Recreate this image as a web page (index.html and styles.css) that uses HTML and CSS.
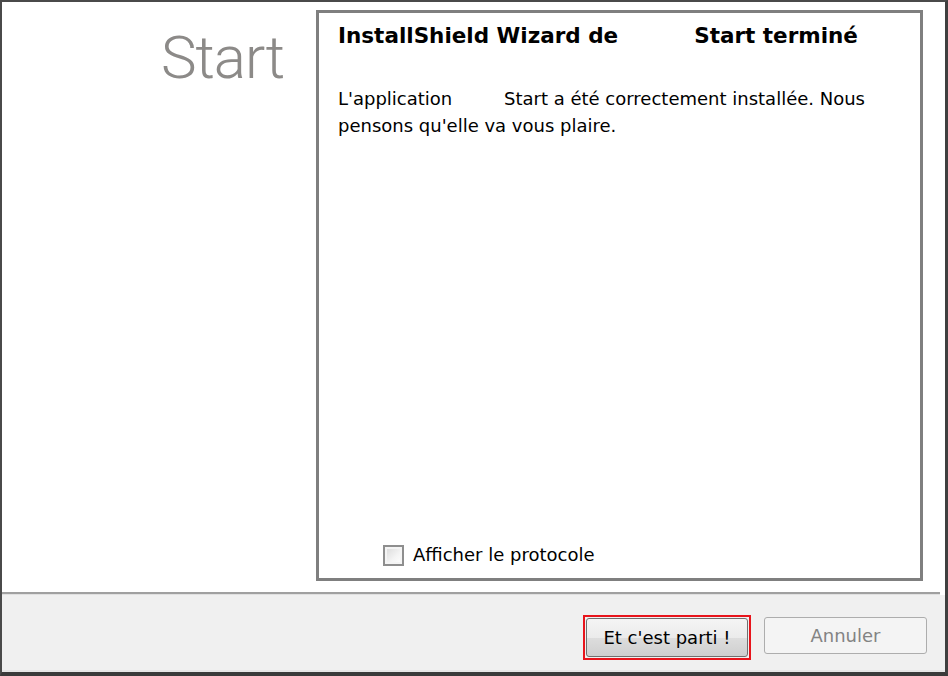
FILE: index.html
```html
<!DOCTYPE html>
<html lang="fr">
<head>
<meta charset="utf-8">
<title>InstallShield Wizard</title>
<link rel="stylesheet" href="styles.css">
</head>
<body>
<div class="window">
  <div class="main">
    <div class="sidebar">
      <div class="brand">Start</div>
    </div>
    <div class="panel">
      <h1 class="title"><span>InstallShield Wizard de</span><span class="title-app">Start terminé</span></h1>
      <p class="message"><span class="lead">L'application</span><span>Start a été correctement installée. Nous</span><br><span>pensons qu'elle va vous plaire.</span></p>
      <div class="spacer"></div>
      <label class="check-row"><span class="checkbox"></span><span class="check-label">Afficher le protocole</span></label>
    </div>
  </div>
  <div class="separator"></div>
  <div class="footer">
    <div class="focus-ring"><button class="btn btn-primary">Et c'est parti !</button></div>
    <button class="btn btn-disabled">Annuler</button>
  </div>
</div>
</body>
</html>
```
FILE: styles.css
```css
html, body {
  margin: 0;
  padding: 0;
  background: #ffffff;
}
.window {
  box-sizing: border-box;
  width: 948px;
  height: 676px;
  border-top: 2px solid #4a4a4a;
  border-left: 2px solid #4a4a4a;
  border-right: 3px solid #3f3f3f;
  border-bottom: 4px solid #3a3a3a;
  display: flex;
  flex-direction: column;
  background: #ffffff;
  font-family: "DejaVu Sans", Verdana, sans-serif;
}
.main {
  height: 590px;
  display: flex;
  background: #ffffff;
  padding-top: 8px;
  padding-bottom: 11px;
  box-sizing: border-box;
}
.sidebar {
  width: 314px;
  display: flex;
  justify-content: flex-end;
  padding-right: 32px;
  box-sizing: border-box;
}
.brand {
  font-family: Roboto, "Liberation Sans", sans-serif;
  font-weight: 300;
  font-size: 60px;
  color: #8c8a88;
  line-height: 1;
  margin-top: 18px;
  letter-spacing: -1px;
}
.panel {
  width: 607px;
  box-sizing: border-box;
  border: 3px solid #7f7f7f;
  display: flex;
  flex-direction: column;
  padding: 0 19px 0 19px;
}
.title {
  margin: 10px 0 0 0;
  font-size: 21.5px;
  font-weight: bold;
  line-height: 26px;
  color: #000000;
  white-space: nowrap;
}
.title-app {
  margin-left: 76px;
}
.message {
  margin: 36px 0 0 0;
  font-size: 18px;
  line-height: 27px;
  color: #000000;
  white-space: nowrap;
}
.lead {
  display: inline-block;
  width: 166px;
}
.spacer {
  flex: 1;
}
.check-row {
  display: flex;
  align-items: center;
  padding-left: 45px;
  margin-bottom: 11px;
  gap: 9px;
}
.checkbox {
  box-sizing: border-box;
  width: 21px;
  height: 21px;
  border: 2px solid #8e8e8e;
  background: linear-gradient(135deg, #d8d8d8 0%, #f4f4f4 60%, #ffffff 100%);
  box-shadow: inset 0 0 0 2px #f4f4f4;
}
.check-label {
  font-size: 18px;
  color: #000000;
  line-height: 24px;
}
.separator {
  height: 2px;
  background: #a0a0a0;
  margin-right: 5px;
  border-bottom: 1px solid #e0e0e0;
}
.footer {
  flex: 1;
  background: #f0f0f0;
  display: flex;
  justify-content: flex-end;
  align-items: flex-start;
  padding: 20px 18px 0 0;
  gap: 13px;
  border-bottom: 2px solid #e6e6e6;
}
.focus-ring {
  border: 2px solid #e8141b;
  padding: 1px;
  display: flex;
}
.btn {
  font-family: "DejaVu Sans", Verdana, sans-serif;
  font-size: 18px;
  border-radius: 3px;
  padding: 0;
  margin: 0;
}
.btn-primary {
  width: 162px;
  height: 39px;
  color: #000000;
  border: 1px solid #707070;
  background: linear-gradient(#f4f4f4 0%, #ebebeb 50%, #dddddd 51%, #cfcfcf 100%);
}
.btn-disabled {
  margin-top: 2px;
  width: 163px;
  height: 37px;
  color: #838383;
  border: 1px solid #adadad;
  background: #f4f4f4;
}
```
